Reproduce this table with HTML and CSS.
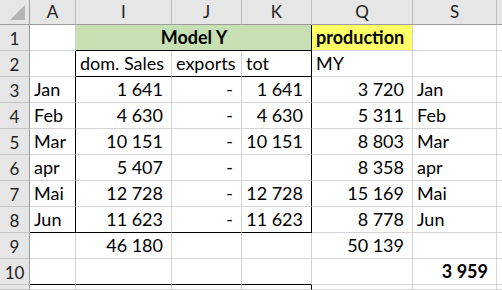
FILE: index.html
```html
<!DOCTYPE html>
<html lang="en">
<head>
    <meta charset="UTF-8">
    <meta name="viewport" content="width=device-width, initial-scale=1.0">
    <title>Model Y production</title>
    <link rel="stylesheet" href="styles.css">
</head>
<body>
    <div class="sheet">
        <!-- column headers -->
        <div class="corner">
            <svg width="29" height="24" viewBox="0 0 29 24"><polygon points="25,5 25,20 10,20" fill="#b4b4b4"/></svg>
        </div>
        <div class="hd">A</div>
        <div class="hd">I</div>
        <div class="hd">J</div>
        <div class="hd">K</div>
        <div class="hd">Q</div>
        <div class="hd">S</div>
        <div class="hd"></div>

        <!-- row 1 -->
        <div class="rh">1</div>
        <div class="c"></div>
        <div class="c span3 green b center bb br">Model Y</div>
        <div class="c yellow b">production</div>
        <div class="c"></div>
        <div class="c"></div>

        <!-- row 2 -->
        <div class="rh">2</div>
        <div class="c br"></div>
        <div class="c bb">dom. Sales</div>
        <div class="c bb">exports</div>
        <div class="c bb br">tot</div>
        <div class="c">MY</div>
        <div class="c"></div>
        <div class="c"></div>

        <!-- row 3 -->
        <div class="rh">3</div>
        <div class="c br">Jan</div>
        <div class="c num">1 641</div>
        <div class="c num">-</div>
        <div class="c num br">1 641</div>
        <div class="c num">3 720</div>
        <div class="c">Jan</div>
        <div class="c"></div>

        <!-- row 4 -->
        <div class="rh">4</div>
        <div class="c br">Feb</div>
        <div class="c num">4 630</div>
        <div class="c num">-</div>
        <div class="c num br">4 630</div>
        <div class="c num">5 311</div>
        <div class="c">Feb</div>
        <div class="c"></div>

        <!-- row 5 -->
        <div class="rh">5</div>
        <div class="c br">Mar</div>
        <div class="c num">10 151</div>
        <div class="c num">-</div>
        <div class="c num br">10 151</div>
        <div class="c num">8 803</div>
        <div class="c">Mar</div>
        <div class="c"></div>

        <!-- row 6 -->
        <div class="rh">6</div>
        <div class="c br">apr</div>
        <div class="c num">5 407</div>
        <div class="c num">-</div>
        <div class="c num br"></div>
        <div class="c num">8 358</div>
        <div class="c">apr</div>
        <div class="c"></div>

        <!-- row 7 -->
        <div class="rh">7</div>
        <div class="c br">Mai</div>
        <div class="c num">12 728</div>
        <div class="c num">-</div>
        <div class="c num br">12 728</div>
        <div class="c num">15 169</div>
        <div class="c">Mai</div>
        <div class="c"></div>

        <!-- row 8 -->
        <div class="rh">8</div>
        <div class="c br bb">Jun</div>
        <div class="c num bb">11 623</div>
        <div class="c num bb">-</div>
        <div class="c num br bb">11 623</div>
        <div class="c num">8 778</div>
        <div class="c">Jun</div>
        <div class="c"></div>

        <!-- row 9 -->
        <div class="rh">9</div>
        <div class="c"></div>
        <div class="c num">46 180</div>
        <div class="c"></div>
        <div class="c"></div>
        <div class="c num">50 139</div>
        <div class="c"></div>
        <div class="c"></div>

        <!-- row 10 -->
        <div class="rh">10</div>
        <div class="c bb"></div>
        <div class="c bb"></div>
        <div class="c bb"></div>
        <div class="c bb"></div>
        <div class="c"></div>
        <div class="c num b">3 959</div>
        <div class="c"></div>

        <!-- row 11 (cut off) -->
        <div class="rh"></div>
        <div class="c"></div>
        <div class="c"></div>
        <div class="c"></div>
        <div class="c br"></div>
        <div class="c"></div>
        <div class="c"></div>
        <div class="c"></div>
    </div>
</body>
</html>
```

FILE: styles.css
```css
body { margin: 0; font-family: Lato, "Liberation Sans", sans-serif; font-size: 18px; color: #000; background: #fff; }

.sheet {
    display: grid;
    grid-template-columns: 30px 46px 96px 70px 70px 101px 84px 1fr;
    grid-template-rows: 25px repeat(10, 26px) 1fr;
    width: 502px;
    height: 290px;
    overflow: hidden;
}

.sheet > div { box-sizing: border-box; overflow: hidden; white-space: nowrap; }

.corner { background: #e6e6e6; border-right: 1px solid #9c9c9c; border-bottom: 1px solid #9c9c9c; }
.corner svg { display: block; }

.hd {
    background: #e6e6e6;
    border-right: 1px solid #bcbcbc;
    border-bottom: 1px solid #9c9c9c;
    display: flex; align-items: flex-end; justify-content: center;
    font-size: 17px; line-height: 19px; padding-bottom: 3px;
    color: #222;
}

.rh {
    background: #e6e6e6;
    border-right: 1px solid #9c9c9c;
    border-bottom: 1px solid #c4c4c4;
    display: flex; align-items: flex-end; justify-content: center;
    font-size: 17px; line-height: 19px; padding-bottom: 2px;
    color: #222;
}

.c {
    border-right: 1px solid #d4d4d4;
    border-bottom: 1px solid #d4d4d4;
    display: flex; align-items: flex-end;
    line-height: 19px; padding: 0 3px 3px 4px;
}

.num { justify-content: flex-end; padding-right: 8px; }
.center { justify-content: center; }
.b { font-weight: bold; }
.span3 { grid-column: span 3; }

.green { background: #c6e0b4; }
.yellow { background: #ffff66; }

.br { border-right-color: #000; }
.bb { border-bottom-color: #000; }
```
